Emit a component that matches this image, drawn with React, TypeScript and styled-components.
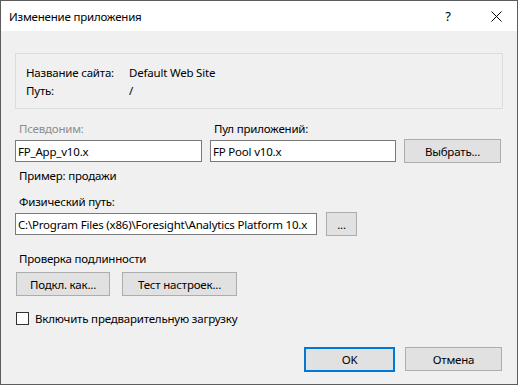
import { createGlobalStyle } from "styled-components";
import styled from "styled-components";

const GlobalStyle = createGlobalStyle`
	html, body {
		margin: 0;
		padding: 0;
		background: #f0f0f0;
	}
	* {
		box-sizing: border-box;
	}
	body {
		font-family: "Noto Sans", "Open Sans", sans-serif;
		font-size: 11.5px;
		letter-spacing: -0.2px;
		color: #000;
	}
`;

const Window = styled.div`
	width: 518px;
	height: 385px;
	border: 1px solid #5c5c5c;
	background: #f0f0f0;
	display: flex;
	flex-direction: column;
`;

const TitleBar = styled.div`
	height: 30px;
	background: #fff;
	display: flex;
	align-items: center;
	padding-left: 8px;
	flex-shrink: 0;
`;

const Title = styled.div`
	flex: 1;
`;

const TitleButton = styled.div<{ $width: number }>`
	width: ${(p) => p.$width}px;
	height: 30px;
	display: flex;
	align-items: center;
	justify-content: center;
	font-size: 13px;
`;

const Body = styled.div`
	flex: 1;
	padding: 22px 14px 0 14px;
	display: flex;
	flex-direction: column;
`;

const GroupBox = styled.div`
	width: 488px;
	height: 56px;
	border: 1px solid #dcdcdc;
	padding: 9px 0 0 10px;
	display: grid;
	grid-template-columns: 103px auto;
	grid-auto-rows: 18px;
	align-items: center;
`;

const Label = styled.div<{ $disabled?: boolean; $top?: number }>`
	height: 16px;
	line-height: 16px;
	padding-left: 4px;
	margin-top: ${(p) => p.$top ?? 0}px;
	color: ${(p) => (p.$disabled ? "#8d8d8d" : "#000")};
	white-space: nowrap;
`;

const FieldGrid = styled.div`
	display: grid;
	grid-template-columns: 187px 186px 97px;
	column-gap: 8px;
	row-gap: 2px;
	align-items: center;
	margin-top: 12px;
`;

const TextBox = styled.input<{ $width?: number }>`
	width: ${(p) => (p.$width ? `${p.$width}px` : "100%")};
	height: 22px;
	border: 1px solid #7a7a7a;
	background: #fff;
	padding: 0 0 0 2px;
	font-family: inherit;
	font-size: inherit;
	letter-spacing: inherit;
	color: #000;
	outline: none;
	margin: 0;
`;

const Button = styled.button<{ $width: number; $default?: boolean }>`
	width: ${(p) => p.$width}px;
	height: ${(p) => (p.$default ? 25 : 24)}px;
	background: #e1e1e1;
	border: ${(p) => (p.$default ? "2px solid #0078d7" : "1px solid #adadad")};
	font-family: inherit;
	font-size: inherit;
	letter-spacing: inherit;
	color: #000;
	padding: 0;
	margin: 0;
`;

const PathRow = styled.div`
	display: flex;
	align-items: center;
	gap: 9px;
	margin-top: 2px;
`;

const ButtonRow = styled.div`
	display: flex;
	gap: 12px;
	margin-top: 5px;
	padding-left: 1px;
`;

const CheckRow = styled.label`
	display: flex;
	align-items: center;
	gap: 6px;
	margin-top: 14px;
	padding-left: 1px;
	height: 16px;
`;

const CheckBox = styled.span`
	width: 13px;
	height: 13px;
	border: 1px solid #333;
	background: #fff;
`;

const Footer = styled.div`
	display: flex;
	justify-content: flex-end;
	gap: 10px;
	margin-top: 21px;
	padding-right: 1px;
`;

export default function App() {
	return (
		<>
			<GlobalStyle />
			<Window>
				<TitleBar>
					<Title>Изменение приложения</Title>
					<TitleButton $width={54}>?</TitleButton>
					<TitleButton $width={42}>
						<svg width="11" height="11" viewBox="0 0 11 11">
							<path d="M0.5 0.5 L10.5 10.5 M10.5 0.5 L0.5 10.5" stroke="#000" strokeWidth="1" />
						</svg>
					</TitleButton>
				</TitleBar>
				<Body>
					<GroupBox>
						<span>Название сайта:</span>
						<span>Default Web Site</span>
						<span>Путь:</span>
						<span>/</span>
					</GroupBox>
					<FieldGrid>
						<Label $disabled>Псевдоним:</Label>
						<Label>Пул приложений:</Label>
						<span />
						<TextBox readOnly value="FP_App_v10.x" />
						<TextBox readOnly value="FP Pool v10.x" />
						<Button $width={97}>Выбрать...</Button>
					</FieldGrid>
					<Label $top={5}>Пример: продажи</Label>
					<Label $top={10}>Физический путь:</Label>
					<PathRow>
						<TextBox $width={302} readOnly value="C:\Program Files (x86)\Foresight\Analytics Platform 10.x" />
						<Button $width={31}>...</Button>
					</PathRow>
					<Label $top={15}>Проверка подлинности</Label>
					<ButtonRow>
						<Button $width={94}>Подкл. как...</Button>
						<Button $width={115}>Тест настроек...</Button>
					</ButtonRow>
					<CheckRow>
						<CheckBox />
						<span>Включить предварительную загрузку</span>
					</CheckRow>
					<Footer>
						<Button $width={91} $default>
							OK
						</Button>
						<Button $width={97}>Отмена</Button>
					</Footer>
				</Body>
			</Window>
		</>
	);
}
